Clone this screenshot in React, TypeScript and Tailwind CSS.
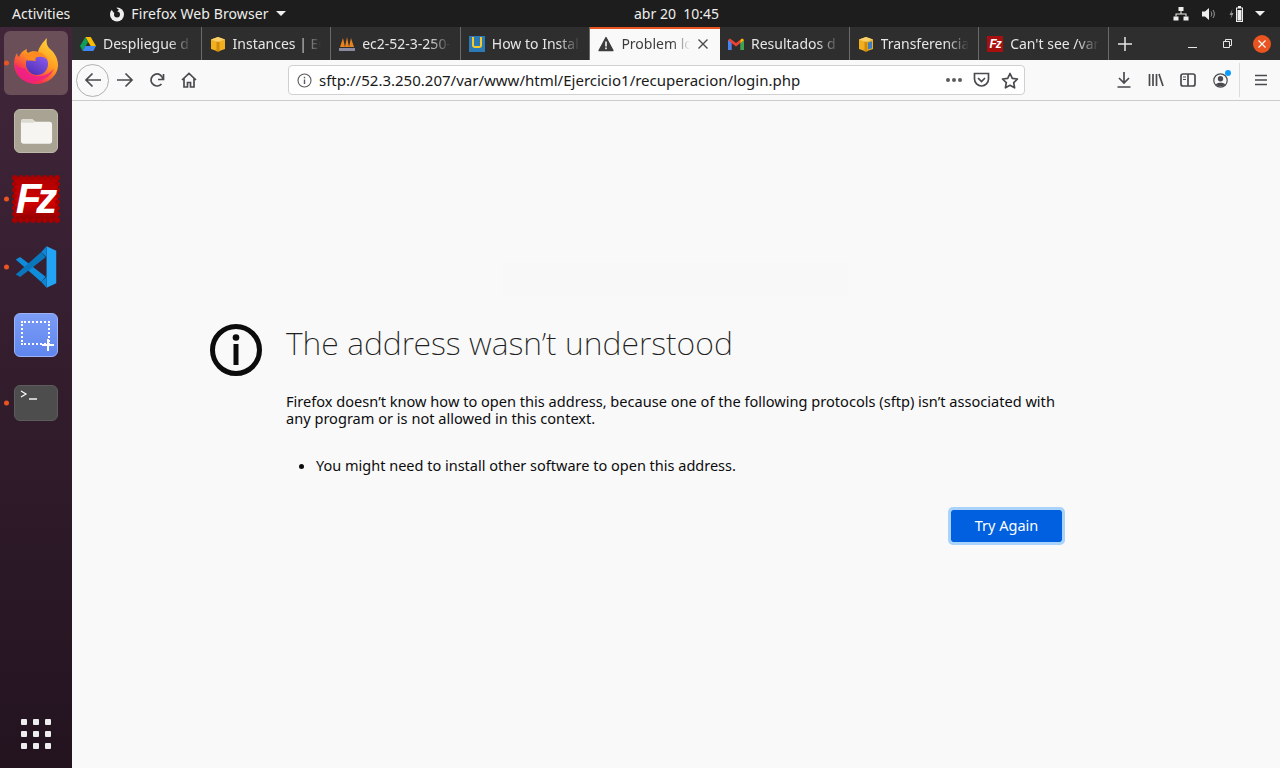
import type { ReactNode } from "react";

const UI = "font-['Noto_Sans',sans-serif]";

const FirefoxLogo = () => (
  <svg width="48" height="48" viewBox="0 0 48 48" className="-mt-[5px]">
    <defs>
      <linearGradient id="ffOuter" x1="0.8" y1="0" x2="0.2" y2="1">
        <stop offset="0" stopColor="#ffd93b" />
        <stop offset="0.45" stopColor="#ff9a20" />
        <stop offset="0.8" stopColor="#f6304f" />
        <stop offset="1" stopColor="#e5189a" />
      </linearGradient>
      <linearGradient id="ffInner" x1="0.8" y1="0" x2="0.2" y2="1">
        <stop offset="0" stopColor="#8f5df0" />
        <stop offset="1" stopColor="#4f2fb5" />
      </linearGradient>
    </defs>
    <path d="M35 1c-1 5 0 8 3 11 5 4 8 10 8 16 0 11-10 19-22 19C12 47 2 38 2 27c0-4 1-8 3-11 0 2 1 3 2 4 1-3 3-6 8-8-1 2 0 3 1 4 3-2 7-2 10-1 1-5 5-10 9-14z" fill="url(#ffOuter)" />
    <circle cx="25" cy="27" r="11" fill="url(#ffInner)" />
    <path d="M13 19c3-3 8-5 13-4 5 1 8 4 10 8-3-3-7-4-10-3-3 0-3 3-2 4-3 0-6-1-8 0-1-2-2-3-3-5z" fill="#ff8a1f" />
    <path d="M3 27c1 10 11 18 22 17 8-1 15-6 17-13-3 5-10 9-17 8-6 0-10-3-12-8-3 1-7-1-10-4z" fill="#f0208a" opacity="0.85" />
  </svg>
);

const FilesIcon = () => (
  <div className="w-11 h-11 rounded-md bg-[#a8a393] border border-[#bdb9aa] flex items-center justify-center">
    <svg width="33" height="28" viewBox="0 0 36 30">
      <path d="M1 5a3 3 0 0 1 3-3h9l4 3h15a3 3 0 0 1 3 3v18a3 3 0 0 1-3 3H4a3 3 0 0 1-3-3z" fill="#f6f5f2" />
      <path d="M1 5a3 3 0 0 1 3-3h9l4 3-3 1H1z" fill="#dcd9d0" />
    </svg>
  </div>
);

// stamp edge: row of small bumps round a square
const STAMP_BUMPS = [3, 9, 15, 21, 27, 33, 39, 45];

const FileZillaIcon = () => (
  <div className="relative w-12 h-12">
    <svg className="absolute inset-0" width="48" height="48" viewBox="0 0 48 48">
      <defs>
        <linearGradient id="fzBg" x1="0" y1="0" x2="0" y2="1">
          <stop offset="0" stopColor="#b00000" />
          <stop offset="0.6" stopColor="#d00000" />
          <stop offset="1" stopColor="#8c0000" />
        </linearGradient>
      </defs>
      <rect x="2" y="2" width="44" height="44" fill="url(#fzBg)" />
      {STAMP_BUMPS.map((p) => (
        <g key={p} fill="#a80000">
          <circle cx={p} cy="2.5" r="2.5" />
          <circle cx={p} cy="45.5" r="2.5" />
          <circle cx="2.5" cy={p} r="2.5" />
          <circle cx="45.5" cy={p} r="2.5" />
        </g>
      ))}
    </svg>
    <div className="absolute inset-0 flex items-center justify-center text-white font-['Liberation_Sans',sans-serif] font-bold italic leading-none">
      <span className="text-[42px] tracking-[-5px] pr-[4px]">Fz</span>
    </div>
  </div>
);

const VSCodeIcon = () => (
  <svg width="44" height="44" viewBox="0 0 100 100">
    <path d="M4 33 14 27 72 72 62 84z" fill="#0f8ddc" />
    <path d="M4 67l10 6L72 28 62 16z" fill="#0a76bb" />
    <path d="M74 3 96 13v74L74 97z" fill="#22a3f3" />
    <path d="M62 16 74 3v25zM62 84l12 13V72z" fill="#0e86d4" />
  </svg>
);

const ScreenshotIcon = () => (
  <div className="w-11 h-11 rounded-md bg-gradient-to-b from-[#7b9cf6] to-[#5f86ee] border border-[#9db3f7] relative p-[6px]">
    <div className="w-[29px] h-[24px] border-[2px] border-dotted border-white mt-[1px]" />
    <svg className="absolute right-[3px] bottom-[5px]" width="12" height="12" viewBox="0 0 12 12">
      <path d="M6 0v12M0 6h12" stroke="white" strokeWidth="2" />
    </svg>
  </div>
);

const TerminalIcon = () => (
  <div className="w-11 h-[36px] rounded-md bg-[#4d4d4d] border border-[#5c5c5c] relative">
    <svg className="absolute left-[5px] top-[3px]" width="18" height="14" viewBox="0 0 18 14">
      <path d="M1 2l5 3-5 3" fill="none" stroke="white" strokeWidth="1.2" />
      <path d="M9 10h8" stroke="white" strokeWidth="1.4" />
    </svg>
  </div>
);

const DockItem = ({ running, active, children }: { running?: boolean; active?: boolean; children: ReactNode }) => (
  <div className={`relative flex items-center justify-center w-[64px] mx-auto rounded-md ${active ? "h-[64px] mb-[2px] bg-[#6a4e58]" : "h-[68px]"}`}>
    {running && <span className="absolute left-0 top-1/2 -translate-y-1/2 w-[5px] h-[5px] rounded-full bg-[#e95420]" />}
    {children}
  </div>
);

const Dock = () => (
  <aside className="w-[72px] shrink-0 flex flex-col pt-[4px] pb-[19px] bg-gradient-to-b from-[#41263a] to-[#23131f]">
    <DockItem running active><FirefoxLogo /></DockItem>
    <DockItem><FilesIcon /></DockItem>
    <DockItem running><FileZillaIcon /></DockItem>
    <DockItem running><VSCodeIcon /></DockItem>
    <DockItem><ScreenshotIcon /></DockItem>
    <DockItem running><TerminalIcon /></DockItem>
    <div className="mt-auto mx-auto grid grid-cols-3 gap-[6px]">
      {Array.from({ length: 9 }).map((_, i) => (
        <span key={i} className="w-[6px] h-[6px] rounded-[1px] bg-[#eeeeee]" />
      ))}
    </div>
  </aside>
);

const TopBar = () => (
  <header className={`h-[27px] bg-[#1d1d1d] text-[#eeeeec] text-[14px] flex items-center relative ${UI}`}>
    <span className="ml-[12px]">Activities</span>
    <div className="ml-[39px] flex items-center gap-[6px]">
      <svg width="16" height="16" viewBox="0 0 16 16">
        <circle cx="8" cy="8.5" r="7" fill="#eeeeec" />
        <circle cx="8" cy="8.5" r="3" fill="#1d1d1d" />
        <path d="M2 3c2-2 4-3 6-3-1 2 0 3 2 3.5L8 6 5 7z" fill="#1d1d1d" />
      </svg>
      <span className="tracking-[0.1px]">Firefox Web Browser</span>
      <span className="ml-[1px] w-0 h-0 border-x-[5px] border-x-transparent border-t-[5px] border-t-[#eeeeec]" />
    </div>
    <span className="absolute left-[634px] whitespace-pre">abr 20  10:45</span>
    <div className="ml-auto mr-[15px] flex items-center">
      <svg width="16" height="14" viewBox="0 0 16 14" fill="#eeeeec">
        <rect x="5.5" y="0" width="5" height="4" />
        <rect x="0.5" y="9.5" width="5" height="4" />
        <rect x="10.5" y="9.5" width="5" height="4" />
        <path d="M7.5 4h1v2.500h5v3h-1v-2h-9v2h-1v-3h5z" />
      </svg>
      <svg className="ml-[13px]" width="15" height="14" viewBox="0 0 15 14" fill="#eeeeec">
        <path d="M0 4.500h3L7 1v12L3 9.500H0z" />
        <path d="M9 4.500c1 1.500 1 3.500 0 5M11 3c1.800 2.400 1.800 5.600 0 8" fill="none" stroke="#9a9a9a" strokeWidth="1" />
      </svg>
      <svg className="ml-[12px]" width="16" height="16" viewBox="0 0 16 16" fill="#eeeeec">
        <path d="M3.500 3 0.500 9h2L1.500 13l3-6h-2z" fill="#9a9a9a" />
        <path d="M9 0h3v1.500h2V16H7V1.500h2zM8 2.500V15h5V2.500z" />
        <rect x="8.500" y="4" width="4" height="10.500" />
      </svg>
      <span className="ml-[10px] w-0 h-0 border-x-[5px] border-x-transparent border-t-[5px] border-t-[#eeeeec]" />
    </div>
  </header>
);

const Favicon = ({ kind }: { kind: string }) => {
  if (kind === "drive")
    return (
      <svg width="16" height="14" viewBox="0 0 16 14">
        <path d="M5.300 0h5.400l5.300 9h-5.300z" fill="#fbbc04" />
        <path d="M5.300 0 0 9l2.700 5L8 5z" fill="#0f9d58" />
        <path d="M2.700 14h10.600l2.700-5H5.300z" fill="#4285f4" />
      </svg>
    );
  if (kind === "box" || kind === "box2")
    return (
      <svg width="16" height="16" viewBox="0 0 16 16">
        <path d="M1 3.500 8 1l7 2.500V13l-7 2.500L1 13z" fill="#f2b01e" />
        <path d="M6.500 1.500h3v14h-3z" fill="#d18a10" />
        <path d="M1 3.500 8 6l7-2.500L8 1z" fill="#f9cf6b" />
        {kind === "box2" && <path d="M10 6.500l4-1.300v7l-4 1.400z" fill="#3f7fc0" />}
      </svg>
    );
  if (kind === "ec2")
    return (
      <svg width="16" height="16" viewBox="0 0 16 16">
        <path d="M4 2 1 11h5zM8 1 6 11h4zM12 2l-2 9h5z" fill="#e8821e" />
        <rect x="0" y="12" width="16" height="3" fill="#8a8aa0" />
      </svg>
    );
  if (kind === "howto")
    return (
      <div className="w-4 h-4 bg-[#2b79b5] flex items-center justify-center">
        <div className="w-[10px] h-[11px] border-[2px] border-t-0 border-[#f5c928] rounded-b-[3px] mb-[2px]" />
      </div>
    );
  if (kind === "warn")
    return (
      <svg width="16" height="16" viewBox="0 0 16 16">
        <path d="M8 1.500 15 14.500H1z" fill="#3c3c3c" stroke="#3c3c3c" strokeLinejoin="round" strokeWidth="1.300" />
        <rect x="7.200" y="5.500" width="1.600" height="5" fill="#f9f9fa" />
        <rect x="7.200" y="11.500" width="1.600" height="1.700" fill="#f9f9fa" />
      </svg>
    );
  if (kind === "gmail")
    return (
      <svg width="16" height="12" viewBox="0 0 16 12">
        <path d="M0 2v10h3.500V5L8 8.500 12.500 5v7H16V2L14 .5 8 5 2 .5z" fill="#ea4335" />
        <path d="M0 2v10h3.500V5z" fill="#4285f4" />
        <path d="M12.500 5v7H16V2z" fill="#34a853" />
        <path d="M14 .5 16 2l-3.500 3V2z" fill="#fbbc04" />
      </svg>
    );
  return (
    <div className="w-4 h-4 bg-[#a80f0f] flex items-center justify-center overflow-hidden">
      <span className="text-white font-['Liberation_Sans',sans-serif] font-bold italic text-[12px] leading-none tracking-[-1px]">Fz</span>
    </div>
  );
};

const TABS = [
  { icon: "drive", label: "Despliegue d" },
  { icon: "box", label: "Instances | EC" },
  { icon: "ec2", label: "ec2-52-3-250-" },
  { icon: "howto", label: "How to Instal" },
  { icon: "warn", label: "Problem lo", active: true },
  { icon: "gmail", label: "Resultados d" },
  { icon: "box2", label: "Transferencia" },
  { icon: "fz", label: "Can't see /var" },
];

const Tab = ({ icon, label, active }: { icon: string; label: string; active?: boolean }) => (
  <div
    className={`w-[129.6px] h-full flex items-center pl-[8px] gap-[7px] text-[14px] ${
      active ? "pr-[11px] pb-[2px] bg-[#f9f9fa] text-[#3c3c3c] border-t-[2px] border-[#e95420]" : "pr-[9px] text-[#e6e6e6] border-r border-[#6a6a6a]"
    }`}
  >
    <span className="w-4 h-4 shrink-0 flex items-center justify-center">
      <Favicon kind={icon} />
    </span>
    <span className="flex-1 min-w-0 overflow-hidden whitespace-nowrap [mask-image:linear-gradient(to_right,black_75%,transparent)]">{label}</span>
    {active && (
      <svg className="shrink-0" width="12" height="12" viewBox="0 0 12 12">
        <path d="M1.500 1.500l9 9M10.500 1.500l-9 9" stroke="#4a4a4a" strokeWidth="1.400" />
      </svg>
    )}
  </div>
);

const TabStrip = () => (
  <div className={`h-[33px] bg-[#2f2e2e] flex items-stretch ${UI}`}>
    {TABS.map((t) => (
      <Tab key={t.label} icon={t.icon} label={t.label} active={t.active} />
    ))}
    <div className="w-[32px] flex items-center justify-center">
      <svg width="14" height="14" viewBox="0 0 14 14">
        <path d="M7 0v14M0 7h14" stroke="#e6e6e6" strokeWidth="1.500" />
      </svg>
    </div>
    <div className="ml-auto flex items-center">
      <div className="w-[9px] h-[1px] bg-[#e6e6e6] mt-[8px] mr-[26px]" />
      <svg className="mr-[21px]" width="9" height="9" viewBox="0 0 9 9">
        <path d="M2.500 2.500V.5h6v6h-2M.5 2.500h6v6h-6z" fill="none" stroke="#e6e6e6" />
      </svg>
      <span className="w-[18px] h-[18px] mr-[9px] rounded-full bg-[#e95420] flex items-center justify-center">
        <svg width="8" height="8" viewBox="0 0 8 8">
          <path d="M.5.500l7 7M7.500.500l-7 7" stroke="white" strokeWidth="1.100" />
        </svg>
      </span>
    </div>
  </div>
);

const ToolIcon = ({ children }: { children: ReactNode }) => (
  <div className="w-[32px] h-[32px] flex items-center justify-center shrink-0">{children}</div>
);

const s = { fill: "none", stroke: "#4a4a4f", strokeWidth: 1.7 };

const Toolbar = () => (
  <div className={`h-[41px] bg-[#f9f9fa] border-b border-[#cccccc] flex items-center pl-[4px] ${UI}`}>
    <div className="w-[33px] h-[33px] rounded-full border border-[#b1b1b3] bg-[#f9f9fa] flex items-center justify-center shrink-0">
      <svg width="18" height="16" viewBox="0 0 18 16" {...s}>
        <path d="M17 8H2M8.500 1.500 2 8l6.500 6.500" />
      </svg>
    </div>
    <ToolIcon>
      <svg width="18" height="16" viewBox="0 0 18 16" {...s}>
        <path d="M1 8h15M9.500 1.500 16 8l-6.500 6.500" />
      </svg>
    </ToolIcon>
    <ToolIcon>
      <svg width="16" height="16" viewBox="0 0 16 16" {...s}>
        <path d="M14 7.500a6 6 0 1 0-1.500 4.500" />
        <path d="M14.500 2v5.500H9" fill="none" />
      </svg>
    </ToolIcon>
    <ToolIcon>
      <svg width="16" height="16" viewBox="0 0 16 16" {...s}>
        <path d="M1 8l7-6.500L15 8M3 6.500V15h3.500v-4.500h3V15H13V6.500" />
      </svg>
    </ToolIcon>
    <div className="ml-[83px] w-[737px] h-[30px] bg-white border border-[#d0d0d0] rounded-[4px] flex items-center shrink-0">
      <svg className="ml-[8px] shrink-0" width="15" height="15" viewBox="0 0 15 15">
        <circle cx="7.500" cy="7.500" r="6.500" fill="none" stroke="#5b5b5f" strokeWidth="1.100" />
        <rect x="6.800" y="6.500" width="1.400" height="4.500" fill="#5b5b5f" />
        <rect x="6.800" y="3.800" width="1.400" height="1.500" fill="#5b5b5f" />
      </svg>
      <span className="ml-[7px] text-[15.03px] text-[#1a1a1a] whitespace-nowrap">sftp://52.3.250.207/var/www/html/Ejercicio1/recuperacion/login.php</span>
      <div className="ml-auto flex items-center gap-[11px] pr-[5px]">
        <div className="flex gap-[2px]">
          <span className="w-[4px] h-[4px] rounded-full bg-[#5b5b5f]" />
          <span className="w-[4px] h-[4px] rounded-full bg-[#5b5b5f]" />
          <span className="w-[4px] h-[4px] rounded-full bg-[#5b5b5f]" />
        </div>
        <svg width="17" height="16" viewBox="0 0 17 16" {...s}>
          <path d="M1.500 1.500h14V7a7 7 0 0 1-14 0z" />
          <path d="M5 6l3.500 3.500L12 6" />
        </svg>
        <svg width="18" height="17" viewBox="0 0 18 17" {...s}>
          <path d="M9 1.500l2.300 4.800 5.200.7-3.800 3.600.9 5.200L9 13.300l-4.600 2.500.9-5.200L1.500 7l5.200-.7z" strokeLinejoin="round" />
        </svg>
      </div>
    </div>
    <div className="ml-[83px] flex items-center">
      <ToolIcon>
        <svg width="14" height="16" viewBox="0 0 14 16" {...s}>
          <path d="M7 0v11M2 6l5 5 5-5M0.500 15h13" />
        </svg>
      </ToolIcon>
      <ToolIcon>
        <svg width="16" height="14" viewBox="0 0 16 14" {...s}>
          <path d="M1.500 1v12M5 1v12M8.500 1v12M11 1l4 12" />
        </svg>
      </ToolIcon>
      <ToolIcon>
        <svg width="16" height="14" viewBox="0 0 16 14" {...s}>
          <rect x="1" y="1" width="14" height="12" rx="2" />
          <path d="M8 1v12" />
          <path d="M3 4h3M3 6.500h3" strokeWidth="1" />
        </svg>
      </ToolIcon>
      <ToolIcon>
        <div className="relative">
          <svg width="15" height="15" viewBox="0 0 15 15">
            <circle cx="7.500" cy="7.500" r="6.700" fill="none" stroke="#4a4a4f" strokeWidth="1.200" />
            <circle cx="7.500" cy="5.800" r="2.700" fill="#4a4a4f" />
            <path d="M2.800 11.500c1-2.300 8.400-2.300 9.400 0-2 2.500-7.400 2.500-9.400 0z" fill="#4a4a4f" />
          </svg>
          <span className="absolute -top-[3px] -right-[3px] w-[6px] h-[6px] rounded-full bg-[#0a9dff]" />
        </div>
      </ToolIcon>
      <div className="w-[1px] h-[34px] bg-[#dcdcdc] ml-[3px]" />
      <div className="ml-[14px]">
        <svg width="14" height="12" viewBox="0 0 14 12" stroke="#4a4a4f" strokeWidth="1.600">
          <path d="M1 1.500h12M1 6h12M1 10.500h12" />
        </svg>
      </div>
    </div>
  </div>
);

const ErrorPage = () => (
  <main className={`relative flex-1 bg-[#f9f9fa] overflow-hidden pt-[222px] pl-[138px] ${UI}`}>
    {/* faint ghost of the previous page */}
    <div className="absolute left-[431px] top-[161px] w-[345px] h-[34px] bg-[#f8f8f9]" />
    <div className="flex">
      <svg className="shrink-0 -ml-[1px] mr-[1px]" width="54" height="54" viewBox="0 0 54 54">
        <circle cx="27" cy="27" r="23.500" fill="none" stroke="#0c0c0d" strokeWidth="5" />
        <circle cx="27" cy="14.500" r="3.300" fill="#0c0c0d" />
        <rect x="24.500" y="21" width="5" height="21" fill="#0c0c0d" />
      </svg>
      <div className="ml-[22px] w-[782px] -mt-[1px]">
        <h1 className="text-[32.15px] leading-[42px] font-extralight text-[#1f1f22] whitespace-nowrap">The address wasn’t understood</h1>
        <p className="mt-[29px] text-[14.58px] leading-[17px] text-[#0c0c0d]">
          Firefox doesn’t know how to open this address, because one of the following protocols (sftp) isn’t associated with any program or is not allowed in this context.
        </p>
        <ul className="mt-[30px] list-disc pl-[30px] text-[14.5px] leading-[17px] text-[#0c0c0d]">
          <li>You might need to install other software to open this address.</li>
        </ul>
        <div className="mt-[36px] flex justify-end pr-[6px]">
          <button className="w-[111px] h-[32px] rounded-[2px] bg-[#0060df] text-white text-[14.5px] outline outline-[3px] outline-[#a9d3fb]">Try Again</button>
        </div>
      </div>
    </div>
  </main>
);

export default function App() {
  return (
    <div className="w-[1280px] h-[768px] flex flex-col overflow-hidden">
      <TopBar />
      <div className="flex flex-1 min-h-0">
        <Dock />
        <div className="flex-1 min-w-0 flex flex-col">
          <TabStrip />
          <Toolbar />
          <ErrorPage />
        </div>
      </div>
    </div>
  );
}
